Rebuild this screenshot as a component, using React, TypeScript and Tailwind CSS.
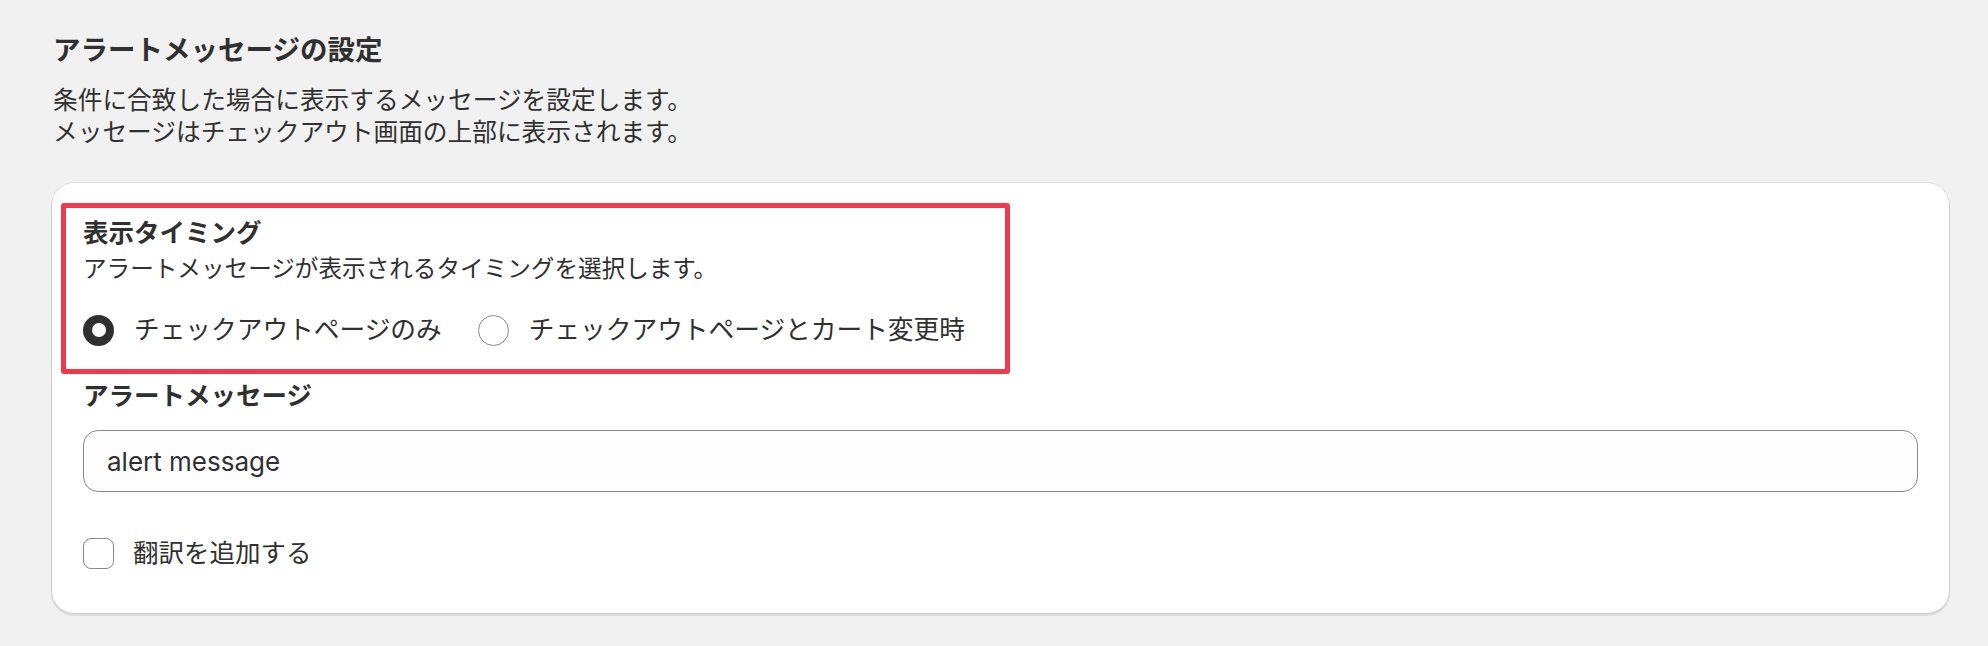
const FONT = "font-['Inter','Noto_Sans_CJK_JP',sans-serif]";

function Radio({ checked, label }: { checked?: boolean; label: string }) {
  return (
    <label className="flex items-center gap-[20px]">
      {checked ? (
        <span className="flex h-[31px] w-[31px] items-center justify-center rounded-full bg-[#303030]">
          <span className="h-[14px] w-[14px] rounded-full bg-white" />
        </span>
      ) : (
        <span className="h-[31px] w-[31px] rounded-full border border-[#8a8a8a] bg-white" />
      )}
      <span className="text-[25.7px] leading-[32px] text-[#303030]">{label}</span>
    </label>
  );
}

export default function App() {
  return (
    <div className={`min-h-screen bg-[#f1f1f1] pl-[52px] pr-[39px] pt-[32px] ${FONT}`}>
      <h2 className="pl-px text-[27.5px] font-bold leading-[36px] text-[#303030]">
        アラートメッセージの設定
      </h2>
      <div className="mt-[17px] pl-px text-[24.7px] leading-[31.5px] text-[#303030]">
        <p>条件に合致した場合に表示するメッセージを設定します。</p>
        <p>メッセージはチェックアウト画面の上部に表示されます。</p>
      </div>

      <div className="mt-[35px] rounded-[22px] bg-white px-[31px] pt-[20px] pb-[44px] shadow-[0_0_0_1px_rgba(0,0,0,0.07),0_2px_0_1px_rgba(0,0,0,0.08)]">
        {/* highlighted section */}
        <div className="-ml-[22px] w-[949px] rounded-[3px] border-[5px] border-[#ee3a4c] pl-[17px] pt-[7px] pb-[23px]">
          <div className="text-[25.5px] font-bold leading-[36px] text-[#303030]">表示タイミング</div>
          <div className="text-[23.6px] leading-[36px] text-[#303030]">
            アラートメッセージが表示されるタイミングを選択します。
          </div>
          <div className="mt-[27px] flex items-center gap-[36px]">
            <Radio checked label="チェックアウトページのみ" />
            <Radio label="チェックアウトページとカート変更時" />
          </div>
        </div>

        <div className="mt-[4px] text-[25.5px] font-bold leading-[36px] text-[#303030]">アラートメッセージ</div>
        <div className="mt-[16px] flex h-[62px] items-center rounded-[15px] border border-[#8a8a8a] bg-[#fdfdfd] pl-[23px]">
          <span className="text-[26px] text-[#303030]">alert message</span>
        </div>

        <label className="mt-[45px] flex items-center gap-[19px]">
          <span className="h-[31px] w-[31px] rounded-[8px] border-[1.5px] border-[#8a8a8a] bg-white" />
          <span className="text-[25.5px] leading-[32px] text-[#303030]">翻訳を追加する</span>
        </label>
      </div>
    </div>
  );
}
